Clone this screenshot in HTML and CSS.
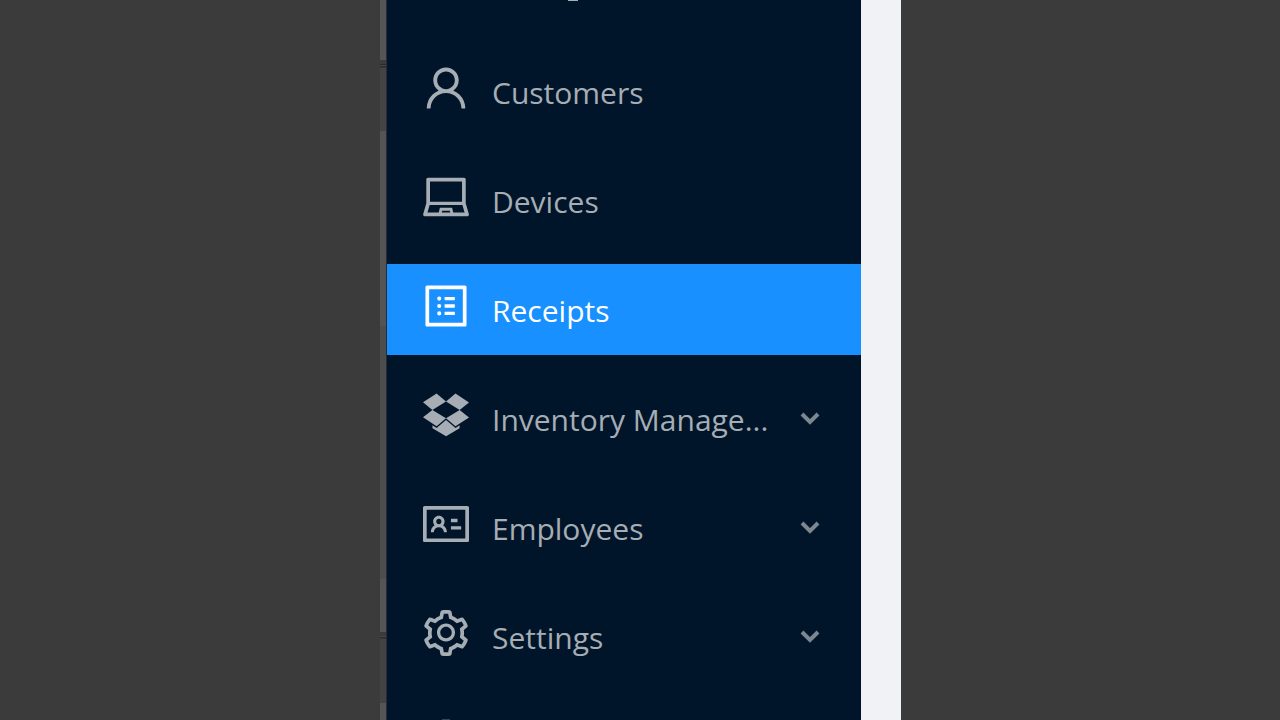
FILE: index.html
```html
<!DOCTYPE html>
<html lang="en">
<head>
<meta charset="utf-8">
<title>Receipts</title>
<link rel="stylesheet" href="styles.css">
</head>
<body>
<div class="layout">
  <div class="backdrop"></div>
  <div class="edge"></div>
  <nav class="sidebar" aria-label="Main">
    <span class="clipped-top"></span>
    <a class="item" href="#customers">
      <svg class="icon" viewBox="64 64 896 896" aria-hidden="true"><path d="M858.5 763.6a374 374 0 0 0-80.6-119.5 375.63 375.63 0 0 0-119.5-80.6c-.4-.2-.8-.3-1.2-.5C719.5 518 760 444.7 760 362c0-137-111-248-248-248S264 225 264 362c0 82.7 40.5 156 102.8 201.1-.4.2-.8.3-1.2.5-44.8 18.9-85 46-119.5 80.6a375.63 375.63 0 0 0-80.6 119.5A371.7 371.7 0 0 0 136 901.8a8 8 0 0 0 8 8.2h60c4.4 0 7.9-3.5 8-7.8 2-77.2 33-149.5 87.8-204.3 56.7-56.7 132-87.9 212.2-87.9s155.5 31.2 212.2 87.9C779 752.7 810 825 812 902.2c.1 4.4 3.6 7.8 8 7.8h60a8 8 0 0 0 8-8.2c-1-47.8-10.9-94.3-29.5-138.2zM512 534c-45.9 0-89.1-17.9-121.6-50.4S340 407.9 340 362c0-45.9 17.9-89.1 50.4-121.6S466.1 190 512 190s89.1 17.9 121.6 50.4S684 316.1 684 362c0 45.9-17.9 89.1-50.4 121.6S557.9 534 512 534z"/></svg>
      <span class="label">Customers</span>
    </a>
    <a class="item" href="#devices">
      <svg class="icon" viewBox="64 64 896 896" aria-hidden="true"><path d="M956.9 845.1L896.4 632V168c0-17.7-14.3-32-32-32h-704c-17.7 0-32 14.3-32 32v464L67.9 845.1C60.4 866 75.8 888 98 888h828.8c22.2 0 37.6-22 30.1-42.9zM200.4 208h624v395h-624V208zm228.3 608l8.1-37h150.3l8.1 37H428.7zm224 0l-19.1-86.7c-.8-3.7-4.1-6.3-7.8-6.3H398.2c-3.8 0-7 2.6-7.8 6.3L371.3 816H151l42.3-149h638.2l42.3 149H652.7z"/></svg>
      <span class="label">Devices</span>
    </a>
    <a class="item item-active" href="#receipts" aria-current="page">
      <svg class="icon" viewBox="64 64 896 896" aria-hidden="true"><path d="M880 112H144c-17.7 0-32 14.3-32 32v736c0 17.7 14.3 32 32 32h736c17.7 0 32-14.3 32-32V144c0-17.7-14.3-32-32-32zm-40 728H184V184h656v656zM492 400h184c4.4 0 8-3.6 8-8v-48c0-4.4-3.6-8-8-8H492c-4.4 0-8 3.6-8 8v48c0 4.4 3.6 8 8 8zm0 144h184c4.4 0 8-3.6 8-8v-48c0-4.4-3.6-8-8-8H492c-4.4 0-8 3.6-8 8v48c0 4.4 3.6 8 8 8zm0 144h184c4.4 0 8-3.6 8-8v-48c0-4.4-3.6-8-8-8H492c-4.4 0-8 3.6-8 8v48c0 4.4 3.6 8 8 8zM340 368a40 40 0 1 0 80 0 40 40 0 1 0-80 0zm0 144a40 40 0 1 0 80 0 40 40 0 1 0-80 0zm0 144a40 40 0 1 0 80 0 40 40 0 1 0-80 0z"/></svg>
      <span class="label">Receipts</span>
    </a>
    <button class="item" type="button" aria-expanded="false">
      <svg class="icon" viewBox="64 64 896 896" aria-hidden="true"><path d="M64 556.9l264.5 173.5L512.5 577 246.8 412.7zM960 266.6L696.8 95 512.5 248.5l265.2 164.2L512.5 577l184.3 153.4L960 558.8 777.7 412.7zM513 609.8L328.2 763.3l-79.4-51.5v57.8L513 928l263.7-158.4v-57.8l-78.9 51.5zM328.2 95L64 265.1l182.8 147.6 265.7-164.2z"/></svg>
      <span class="label">Inventory Manage...</span>
      <svg class="arrow" viewBox="0 0 20 14" aria-hidden="true"><path d="M2 2l8 8 8-8"/></svg>
    </button>
    <button class="item" type="button" aria-expanded="false">
      <svg class="icon" viewBox="64 64 896 896" aria-hidden="true"><path d="M928 160H96c-17.7 0-32 14.3-32 32v640c0 17.7 14.3 32 32 32h832c17.7 0 32-14.3 32-32V192c0-17.7-14.3-32-32-32zm-40 632H136V232h752v560zM610.3 476h123.4c1.3 0 2.3-3.6 2.3-8v-48c0-4.4-1-8-2.3-8H610.3c-1.3 0-2.3 3.6-2.3 8v48c0 4.4 1 8 2.3 8zm4.8 144h185.7c3.9 0 7.1-3.6 7.1-8v-48c0-4.4-3.2-8-7.1-8H615.1c-3.9 0-7.1 3.6-7.1 8v48c0 4.4 3.2 8 7.1 8zM224 673h43.9c4.2 0 7.6-3.3 7.9-7.5 3.8-50.5 46-90.5 97.2-90.5s93.4 40 97.2 90.5c.3 4.2 3.7 7.5 7.9 7.5H522a8 8 0 0 0 8-8.4c-2.8-53.3-32-99.7-74.6-126.1a111.8 111.8 0 0 0 29.1-75.5c0-61.9-49.9-112-111.4-112s-111.4 50.1-111.4 112c0 29.1 11 55.5 29.1 75.5a158.09 158.09 0 0 0-74.6 126.1c-.4 4.6 3.2 8.4 7.8 8.4zm149-262c28.5 0 51.7 23.3 51.7 52s-23.2 52-51.7 52-51.7-23.3-51.7-52 23.2-52 51.7-52z"/></svg>
      <span class="label">Employees</span>
      <svg class="arrow" viewBox="0 0 20 14" aria-hidden="true"><path d="M2 2l8 8 8-8"/></svg>
    </button>
    <button class="item" type="button" aria-expanded="false">
      <svg class="icon" viewBox="64 64 896 896" aria-hidden="true"><path d="M924.8 625.7l-65.5-56c3.1-19 4.7-38.4 4.7-57.8s-1.6-38.8-4.7-57.8l65.5-56a32.03 32.03 0 0 0 9.3-35.2l-.9-2.6a443.74 443.74 0 0 0-79.7-137.9l-1.8-2.1a32.12 32.12 0 0 0-35.1-9.5l-81.3 28.9c-30-24.6-63.5-44-99.7-57.6l-15.7-85a32.05 32.05 0 0 0-25.8-25.7l-2.7-.5c-52.1-9.4-106.9-9.4-159 0l-2.7.5a32.05 32.05 0 0 0-25.8 25.7l-15.8 85.4a351.86 351.86 0 0 0-99 57.4l-81.9-29.1a32 32 0 0 0-35.1 9.5l-1.8 2.1a446.02 446.02 0 0 0-79.7 137.9l-.9 2.6c-4.5 12.5-.8 26.5 9.3 35.2l66.3 56.6c-3.1 18.8-4.6 38-4.6 57.1 0 19.2 1.5 38.4 4.6 57.1L99 625.5a32.03 32.03 0 0 0-9.3 35.2l.9 2.6c18.1 50.4 44.9 96.9 79.7 137.9l1.8 2.1a32.12 32.12 0 0 0 35.1 9.5l81.9-29.1c29.8 24.5 63.1 43.9 99 57.4l15.8 85.4a32.05 32.05 0 0 0 25.8 25.7l2.7.5a449.4 449.4 0 0 0 159 0l2.7-.5a32.05 32.05 0 0 0 25.8-25.7l15.7-85a350 350 0 0 0 99.7-57.6l81.3 28.9a32 32 0 0 0 35.1-9.5l1.8-2.1c34.8-41.1 61.6-87.5 79.7-137.9l.9-2.6c4.5-12.3.8-26.3-9.3-35zM788.3 465.9c2.5 15.1 3.8 30.6 3.8 46.1s-1.3 31-3.8 46.1l-6.6 40.1 74.7 63.9a370.03 370.03 0 0 1-42.6 73.6L721 702.8l-31.4 25.8c-23.9 19.6-50.5 35-79.3 45.8l-38.1 14.3-17.9 97a377.5 377.5 0 0 1-85 0l-17.9-97.2-37.8-14.5c-28.5-10.8-55-26.2-78.7-45.7l-31.4-25.9-93.4 33.2c-17-22.9-31.2-47.6-42.6-73.6l75.5-64.5-6.5-40c-2.4-14.9-3.7-30.3-3.7-45.5 0-15.3 1.2-30.6 3.7-45.5l6.5-40-75.5-64.5c11.3-26.1 25.6-50.7 42.6-73.6l93.4 33.2 31.4-25.9c23.7-19.5 50.2-34.9 78.7-45.7l37.9-14.3 17.9-97.2c28.1-3.2 56.8-3.2 85 0l17.9 97 38.1 14.3c28.7 10.8 55.4 26.2 79.3 45.8l31.4 25.8 92.8-32.9c17 22.9 31.2 47.6 42.6 73.6L781.8 426l6.5 39.9zM512 326c-97.2 0-176 78.8-176 176s78.8 176 176 176 176-78.8 176-176-78.8-176-176-176zm79.2 255.2A111.6 111.6 0 0 1 512 614c-29.9 0-58-11.7-79.2-32.8A111.6 111.6 0 0 1 400 502c0-29.9 11.7-58 32.8-79.2C454 401.6 482.1 390 512 390c29.9 0 58 11.6 79.2 32.8A111.6 111.6 0 0 1 624 502c0 29.9-11.7 58-32.8 79.2z"/></svg>
      <span class="label">Settings</span>
      <svg class="arrow" viewBox="0 0 20 14" aria-hidden="true"><path d="M2 2l8 8 8-8"/></svg>
    </button>
    <span class="clipped-bottom"></span>
  </nav>
  <main class="content"></main>
  <div class="backdrop"></div>
</div>
</body>
</html>
```
FILE: styles.css
```css
* {
  box-sizing: border-box;
}

body {
  margin: 0;
  background: #3b3b3b;
  font-family: "Open Sans", "Noto Sans", sans-serif;
}

.layout {
  display: grid;
  grid-template-columns: 380fr 7px 474px 40px 379fr;
  height: 100vh;
  overflow: hidden;
}

.backdrop {
  background: #3b3b3b;
}

.edge {
  border-right: 1px solid #252d35;
  background: linear-gradient(
    #555 60px, #3b3b3b 60px 64px, #292929 64px 65px, #484848 65px 66px,
    #2b2b2b 66px 67px, #444 68px 131px, #545454 131px 326px,
    #4d4d4d 326px 579px, #555 579px 632px, #3b3b3b 632px 636px,
    #484848 636px 637px, #2b2b2b 637px 638px, #434343 639px 703px,
    #555 703px);
}

.sidebar {
  display: flex;
  flex-direction: column;
  gap: 18px;
  background: #001529;
  overflow: hidden;
}

/* Tail of the entry scrolled off above the first row */
.clipped-top {
  flex: none;
  width: 10px;
  height: 1px;
  margin: 0 0 27px 181px;
  background: #a6adb4;
}

/* Tip of the icon in the next row down */
.clipped-bottom {
  flex: none;
  width: 8px;
  height: 1px;
  margin: 19px 0 0 55px;
  background: #35475a;
}

.item {
  display: flex;
  flex: none;
  align-items: center;
  height: 91px;
  padding: 0 41px 0 36px;
  border: 0;
  background: transparent;
  color: #a6adb4;
  font: inherit;
  font-size: 30px;
  line-height: 44px;
  text-align: left;
  text-decoration: none;
}

.item-active {
  background: #1890ff;
  color: #fff;
}

.icon {
  flex: none;
  width: 46px;
  height: 46px;
  margin: 0 23px 8px 0;
  fill: currentColor;
  overflow: visible;
}

.label {
  flex: 1;
  min-width: 0;
  padding-top: 3px;
  white-space: nowrap;
}

.arrow {
  flex: none;
  width: 20px;
  height: 14px;
  margin-left: 20px;
  fill: none;
  stroke: #7d8791;
  stroke-width: 4;
}

.content {
  background: #f0f2f5;
}
```
